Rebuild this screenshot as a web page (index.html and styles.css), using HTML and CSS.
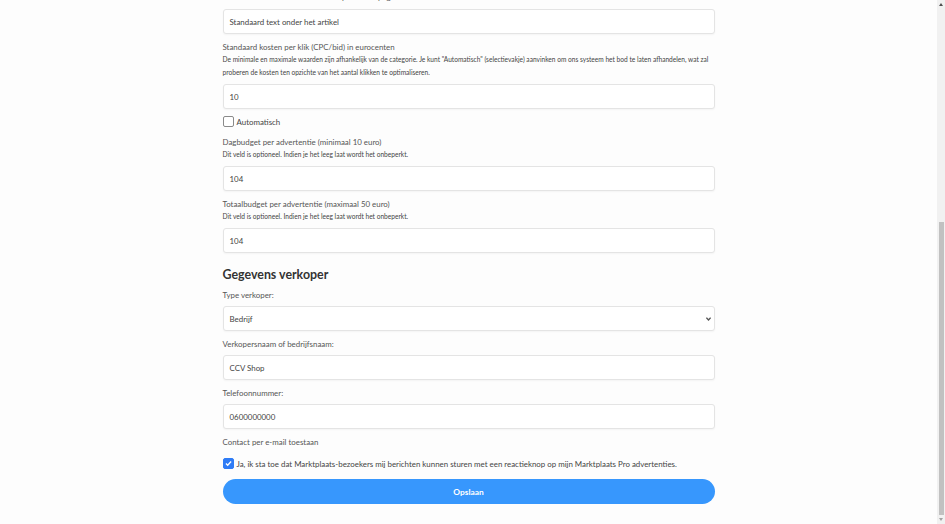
FILE: index.html
```html
<!DOCTYPE html>
<html lang="nl">
<head>
<meta charset="utf-8">
<title>Advertentie instellingen</title>
<link rel="stylesheet" href="styles.css">
</head>
<body>
<div class="page">
  <main class="main">
    <form class="form">
      <label class="label cut">Standaard tekst onder het artikel op de detailpagina</label>
      <div class="input"><span>Standaard text onder het artikel</span></div>

      <label class="label">Standaard kosten per klik (CPC/bid) in eurocenten</label>
      <p class="help">De minimale en maximale waarden zijn afhankelijk van de categorie. Je kunt "Automatisch" (selectievakje) aanvinken om ons systeem het bod te laten afhandelen, wat zal proberen de kosten ten opzichte van het aantal klikken te optimaliseren.</p>
      <div class="input"><span>10</span></div>

      <div class="check-row first">
        <span class="box"></span>
        <span class="check-text">Automatisch</span>
      </div>

      <label class="label after-check">Dagbudget per advertentie (minimaal 10 euro)</label>
      <p class="help">Dit veld is optioneel. Indien je het leeg laat wordt het onbeperkt.</p>
      <div class="input"><span>104</span></div>

      <label class="label">Totaalbudget per advertentie (maximaal 50 euro)</label>
      <p class="help">Dit veld is optioneel. Indien je het leeg laat wordt het onbeperkt.</p>
      <div class="input"><span>104</span></div>

      <h2 class="heading">Gegevens verkoper</h2>

      <label class="label plain">Type verkoper:</label>
      <div class="input select"><span>Bedrijf</span>
        <svg class="caret" width="5" height="4" viewBox="0 0 5 4"><path d="M0.4 0.6 L2.5 3 L4.6 0.6" fill="none" stroke="#555" stroke-width="1.3"/></svg>
      </div>

      <label class="label plain">Verkopersnaam of bedrijfsnaam:</label>
      <div class="input"><span>CCV Shop</span></div>

      <label class="label plain">Telefoonnummer:</label>
      <div class="input"><span>0600000000</span></div>

      <label class="label plain">Contact per e-mail toestaan</label>
      <div class="check-row second">
        <span class="box checked">
          <svg width="11" height="11" viewBox="0 0 11 11"><path d="M2.4 5.6 L4.5 7.7 L8.7 3" fill="none" stroke="#fff" stroke-width="1.6"/></svg>
        </span>
        <span class="check-text">Ja, ik sta toe dat Marktplaats-bezoekers mij berichten kunnen sturen met een reactieknop op mijn Marktplaats Pro advertenties.</span>
      </div>

      <button type="button" class="btn">Opslaan</button>
    </form>
  </main>
  <div class="scrollbar">
    <span class="arrow up"></span>
    <div class="track"><div class="thumb"></div></div>
    <span class="arrow down"></span>
  </div>
</div>
</body>
</html>
```

FILE: styles.css
```css
html, body {
  margin: 0;
  padding: 0;
  height: 524px;
  overflow: hidden;
  background: #fdfdfd;
}

body {
  font-family: "Lato", "Liberation Sans", sans-serif;
  color: #444;
}

.page {
  display: flex;
  height: 524px;
}

.main {
  flex: 1;
  display: flex;
  justify-content: center;
  align-items: flex-start;
}

.form {
  width: 492px;
  margin-top: -9px;
  display: flex;
  flex-direction: column;
}

.form > * {
  flex-shrink: 0;
}

.label {
  display: block;
  font-size: 7.9px;
  line-height: 12px;
  color: #555;
  margin-top: 7px;
  margin-bottom: 0;
  white-space: nowrap;
}

.label.cut {
  margin-top: 0;
  margin-bottom: 6px;
}

.label.after-check {
  margin-top: 9px;
}

.label.plain {
  margin-top: 7px;
  margin-bottom: 5px;
}

.heading + .label.plain {
  margin-top: 6px;
}

.help {
  margin: 0 0 5px;
  font-size: 6.6px;
  line-height: 13px;
  color: #444;
}

.input {
  box-sizing: border-box;
  height: 25px;
  border: 1px solid #e4e4e4;
  border-radius: 3px;
  background: #fff;
  box-shadow: 0 1px 2px rgba(0, 0, 0, 0.04);
  display: flex;
  align-items: center;
  padding: 0 6px;
  font-size: 7.9px;
  color: #444;
}

.select {
  justify-content: space-between;
  padding-right: 3px;
}

.check-row {
  display: flex;
  align-items: center;
  gap: 3px;
  height: 11px;
}

.check-row.first {
  margin-top: 7px;
}

.check-row.second {
  margin-top: 5px;
}

.box {
  box-sizing: border-box;
  flex: 0 0 11px;
  width: 11px;
  height: 11px;
  border: 1px solid #8a8a8a;
  border-radius: 2px;
  background: #fff;
  display: flex;
  align-items: center;
  justify-content: center;
}

.box.checked {
  background: #2f7cf6;
  border-color: #2f7cf6;
}

.box svg {
  display: block;
}

.check-text {
  font-size: 7.9px;
  color: #444;
  white-space: nowrap;
}

.heading {
  margin: 14px 0 0;
  font-size: 12.4px;
  line-height: 16px;
  font-weight: 700;
  color: #333;
}

.btn {
  margin-top: 10px;
  height: 25px;
  border: none;
  border-radius: 13px;
  background: #3797fd;
  color: #fff;
  font-family: "Lato", "Liberation Sans", sans-serif;
  font-size: 8.4px;
  font-weight: 700;
  cursor: pointer;
}

.scrollbar {
  width: 8px;
  background: #f1f1f1;
  display: flex;
  flex-direction: column;
  align-items: center;
}

.arrow {
  width: 0;
  height: 0;
  border-left: 2.5px solid transparent;
  border-right: 2.5px solid transparent;
  margin: 3px 0;
}

.arrow.up {
  border-bottom: 3px solid #505050;
}

.arrow.down {
  border-top: 3px solid #a3a3a3;
}

.track {
  flex: 1;
  width: 100%;
  display: flex;
  flex-direction: column;
  justify-content: flex-end;
}

.thumb {
  height: 293px;
  margin: 0 1.5px;
  background: #c1c1c1;
}
```
